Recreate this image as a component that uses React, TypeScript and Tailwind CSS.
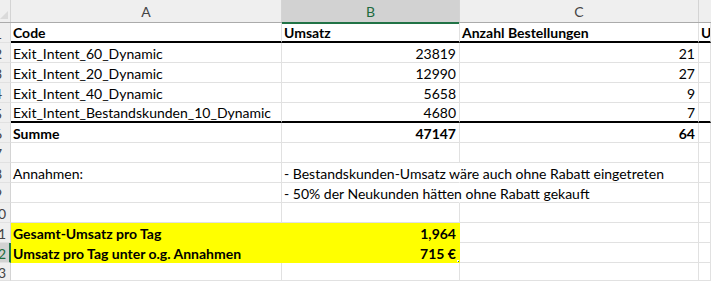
import React from "react";

type CellDef = {
  text?: string;
  bold?: boolean;
  right?: boolean;
  yellow?: boolean;
  noRight?: boolean;
  selected?: boolean;
};

type RowDef = {
  n: string;
  cells: CellDef[];
  thick?: boolean;
  h?: number;
  selected?: boolean;
};

const W = ["w-[271px]", "w-[178px]", "w-[239px]", "flex-1"];

const rows: RowDef[] = [
  {
    n: "1",
    thick: true,
    cells: [
      { text: "Code", bold: true },
      { text: "Umsatz", bold: true },
      { text: "Anzahl Bestellungen", bold: true },
      { text: "Umsatz", bold: true },
    ],
  },
  { n: "2", cells: [{ text: "Exit_Intent_60_Dynamic" }, { text: "23819", right: true }, { text: "21", right: true }, {}] },
  { n: "3", cells: [{ text: "Exit_Intent_20_Dynamic" }, { text: "12990", right: true }, { text: "27", right: true }, {}] },
  { n: "4", cells: [{ text: "Exit_Intent_40_Dynamic" }, { text: "5658", right: true }, { text: "9", right: true }, {}] },
  {
    n: "5",
    thick: true,
    cells: [{ text: "Exit_Intent_Bestandskunden_10_Dynamic" }, { text: "4680", right: true }, { text: "7", right: true }, {}],
  },
  {
    n: "6",
    cells: [
      { text: "Summe", bold: true },
      { text: "47147", bold: true, right: true },
      { text: "64", bold: true, right: true },
      {},
    ],
  },
  { n: "7", cells: [{}, {}, {}, {}] },
  {
    n: "8",
    cells: [
      { text: "Annahmen:" },
      { text: "- Bestandskunden-Umsatz wäre auch ohne Rabatt eingetreten", noRight: true },
      {},
      {},
    ],
  },
  {
    n: "9",
    cells: [{}, { text: "- 50% der Neukunden hätten ohne Rabatt gekauft", noRight: true }, {}, {}],
  },
  { n: "10", cells: [{}, {}, {}, {}] },
  {
    n: "11",
    cells: [
      { text: "Gesamt-Umsatz pro Tag", bold: true, yellow: true },
      { text: "1,964", bold: true, right: true, yellow: true },
      {},
      {},
    ],
  },
  {
    n: "12",
    selected: true,
    cells: [
      { text: "Umsatz pro Tag unter o.g. Annahmen", bold: true, yellow: true },
      { text: "715 €", bold: true, right: true, yellow: true, selected: true },
      {},
      {},
    ],
  },
  { n: "13", h: 18, cells: [{}, {}, {}, {}] },
];

function Cell({ c, i, thick }: { c: CellDef; i: number; thick?: boolean }) {
  const borderB = thick ? "border-b-2 border-b-black" : c.yellow ? "border-b border-b-[#ffff00]" : "border-b border-b-[#e1e1e1]";
  const borderR = c.noRight
    ? "border-r border-r-transparent"
    : c.yellow
    ? "border-r border-r-[#ffff00]"
    : "border-r border-r-[#e1e1e1]";
  return (
    <div
      className={`${W[i]} relative h-full shrink-0 box-border flex items-center pt-[2px] whitespace-nowrap ${borderB} ${borderR} ${
        c.yellow ? "bg-[#ffff00]" : ""
      } ${c.right ? "justify-end pr-[3px]" : "pl-[2px]"} ${c.bold ? "font-bold" : ""} ${
        i === 3 ? "overflow-hidden" : c.noRight ? "overflow-visible z-10" : "overflow-hidden"
      }`}
    >
      <span className="leading-[20px]">{c.text}</span>
      {c.selected && (
        <div className="absolute left-[-2px] top-[-2px] right-[-2px] bottom-[-2px] border-2 border-[#217346] pointer-events-none">
          <div className="absolute right-[-4px] bottom-[-4px] w-[6px] h-[6px] bg-[#217346] border border-white" />
        </div>
      )}
    </div>
  );
}

export default function App() {
  return (
    <div
      className="w-[711px] h-[281px] overflow-hidden bg-white text-black text-[14px]"
      style={{ fontFamily: "Lato, 'Liberation Sans', sans-serif" }}
    >
      {/* column header */}
      <div className="flex h-[23px] bg-[#efefef] border-b border-b-[#ababab] box-border text-[#444]">
        <div className="w-[11px] shrink-0 h-full border-r border-r-[#d4d4d4] box-border relative overflow-hidden">
          <svg className="absolute right-[2px] bottom-[3px]" width="8" height="8" viewBox="0 0 8 8">
            <polygon points="8,0 8,8 0,8" fill="#dadada" />
          </svg>
        </div>
        <div className="w-[271px] shrink-0 h-full flex items-center justify-center border-r border-r-[#d4d4d4] box-border">A</div>
        <div className="w-[178px] shrink-0 h-[24px] flex items-center justify-center bg-[#d2d2d2] border-b-2 border-b-[#217346] border-r border-r-[#d4d4d4] box-border text-[#1e6b3e]">
          B
        </div>
        <div className="w-[239px] shrink-0 h-full flex items-center justify-center border-r border-r-[#d4d4d4] box-border">C</div>
        <div className="flex-1 h-full" />
      </div>
      {rows.map((r) => (
        <div key={r.n} className={`flex ${r.h === 18 ? "h-[18px]" : "h-[20px]"}`}>
          <div
            className={`w-[11px] shrink-0 h-full overflow-hidden box-border border-b border-b-[#e1e1e1] ${
              r.selected ? "bg-[#d2d2d2] border-r-2 border-r-[#217346] text-[#1e6b3e]" : "bg-[#efefef] border-r border-r-[#d4d4d4] text-[#444]"
            }`}
          >
            <div className="w-[30px] ml-[-17px] h-full flex items-center justify-center pt-[2px] leading-[20px]">{r.n}</div>
          </div>
          {r.cells.map((c, i) => (
            <Cell key={i} c={c} i={i} thick={r.thick && i < 4} />
          ))}
        </div>
      ))}
    </div>
  );
}
